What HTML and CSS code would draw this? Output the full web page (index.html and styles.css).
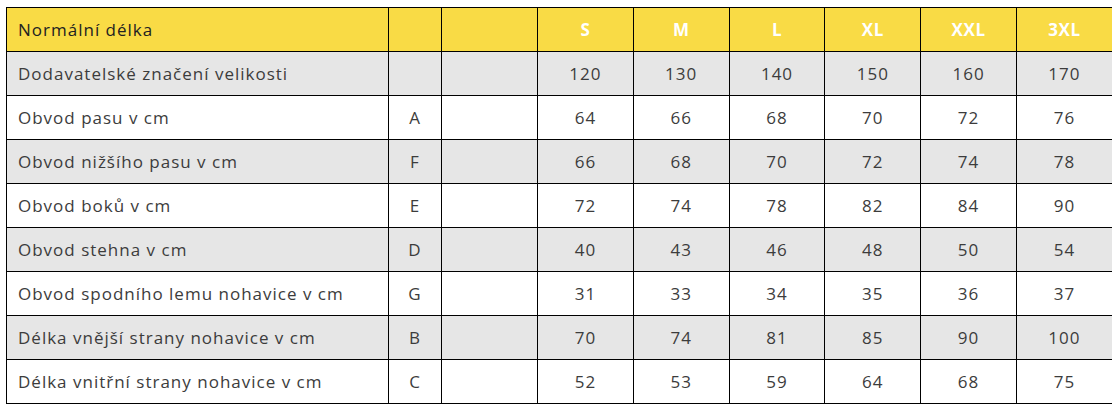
FILE: index.html
```html
<!DOCTYPE html>
<html lang="cs">
<head>
<meta charset="utf-8">
<link rel="stylesheet" href="styles.css">
</head>
<body>
<div class="wrap">
<table class="sizes">
<colgroup>
<col class="c-name"><col class="c-letter"><col class="c-empty">
<col class="c-size"><col class="c-size"><col class="c-size"><col class="c-size"><col class="c-size"><col class="c-size">
</colgroup>
<tr class="head"><td class="name">Normální délka</td><td></td><td></td><td class="sz">S</td><td class="sz">M</td><td class="sz">L</td><td class="sz">XL</td><td class="sz">XXL</td><td class="sz">3XL</td></tr>
<tr class="gray"><td class="name">Dodavatelské značení velikosti</td><td></td><td></td><td>120</td><td>130</td><td>140</td><td>150</td><td>160</td><td>170</td></tr>
<tr><td class="name">Obvod pasu v cm</td><td>A</td><td></td><td>64</td><td>66</td><td>68</td><td>70</td><td>72</td><td>76</td></tr>
<tr class="gray"><td class="name">Obvod nižšího pasu v cm</td><td>F</td><td></td><td>66</td><td>68</td><td>70</td><td>72</td><td>74</td><td>78</td></tr>
<tr><td class="name">Obvod boků v cm</td><td>E</td><td></td><td>72</td><td>74</td><td>78</td><td>82</td><td>84</td><td>90</td></tr>
<tr class="gray"><td class="name">Obvod stehna v cm</td><td>D</td><td></td><td>40</td><td>43</td><td>46</td><td>48</td><td>50</td><td>54</td></tr>
<tr><td class="name">Obvod spodního lemu nohavice v cm</td><td>G</td><td></td><td>31</td><td>33</td><td>34</td><td>35</td><td>36</td><td>37</td></tr>
<tr class="gray"><td class="name">Délka vnější strany nohavice v cm</td><td>B</td><td></td><td>70</td><td>74</td><td>81</td><td>85</td><td>90</td><td>100</td></tr>
<tr><td class="name">Délka vnitřní strany nohavice v cm</td><td>C</td><td></td><td>52</td><td>53</td><td>59</td><td>64</td><td>68</td><td>75</td></tr>
</table>
</div>
</body>
</html>
```
FILE: styles.css
```css
html, body { margin: 0; padding: 0; background: #fff; }
.wrap { padding: 7px 0 0 6px; }
.sizes {
  border-collapse: collapse;
  table-layout: fixed;
  width: 1106px;
  font-family: "Open Sans", "Noto Sans", sans-serif;
  font-size: 17px;
  letter-spacing: 1px;
  color: #3c3c3c;
}
.c-name { width: 382px; }
.c-letter { width: 53px; }
.c-empty { width: 96px; }
.c-size { width: 95.8px; }
.sizes td {
  border: 1px solid #000;
  height: 44px;
  padding: 0;
  text-align: center;
  vertical-align: middle;
  box-sizing: border-box;
}
.sizes td.name { text-align: left; padding-left: 11px; }
.head td { background: #f9db45; }
.head td.name { color: #222; }
.head td.sz { color: #fff; font-weight: 700; letter-spacing: 0.6px; }
.gray td { background: #e6e6e6; }
```
